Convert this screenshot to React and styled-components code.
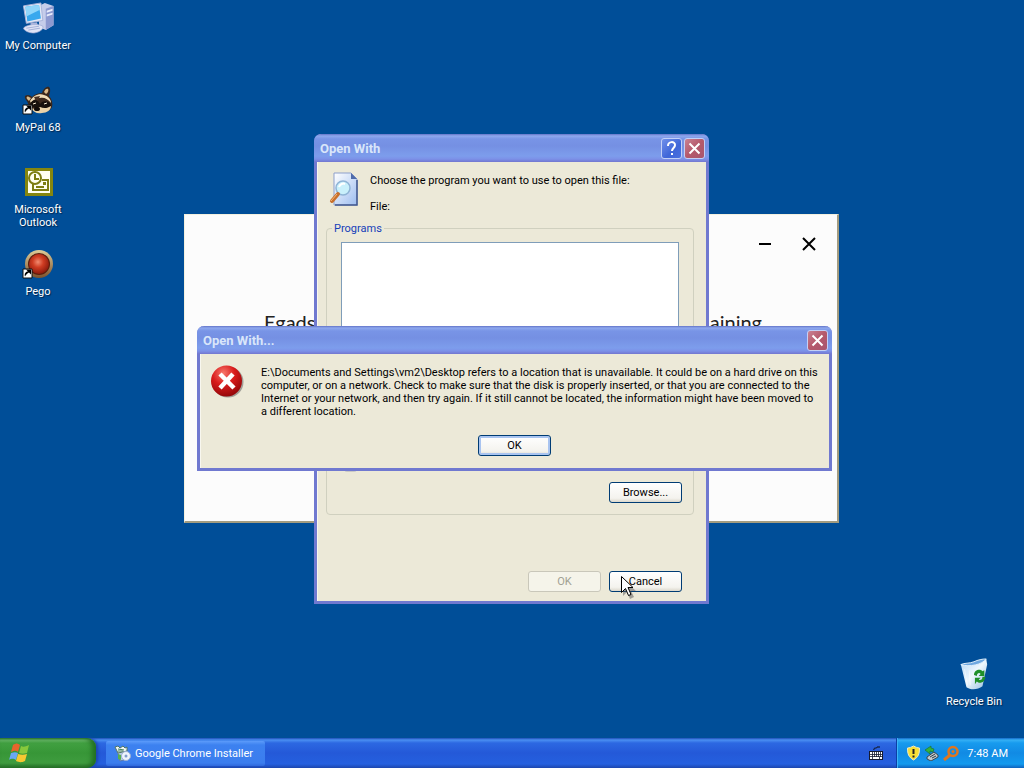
import React from "react";
import styled, { createGlobalStyle, css } from "styled-components";

const GlobalStyle = createGlobalStyle`
  * { box-sizing: border-box; }
  html, body { margin: 0; padding: 0; }
  body {
    font-family: Roboto, "Liberation Sans", sans-serif;
    font-size: 11px;
    line-height: 13px;
    color: #000;
    background: #004e98;
  }
  button, input { font: inherit; color: inherit; }
`;

const Desktop = styled.div`
  display: flex;
  flex-direction: column;
  min-height: 100vh;
  background: #004e98;
  overflow: hidden;
`;

const Workspace = styled.main`
  position: relative;
  flex: 1;
`;

const IconColumn = styled.div`
  display: flex;
  flex-direction: column;
  width: 76px;
  padding-top: 2px;
`;

const Shortcut = styled.button`
  display: flex;
  flex-direction: column;
  align-items: center;
  gap: 5px;
  width: 76px;
  height: ${(p) => (p.$compact ? "auto" : "82px")};
  padding: 0;
  border: 0;
  background: none;
  color: #fff;
  text-shadow: 1px 1px 1px #00264d;
  svg { display: block; }
`;

const BinCorner = styled.div`
  position: absolute;
  right: 12px;
  bottom: 30px;
`;

const Frame = styled.section`
  position: absolute;
  left: ${(p) => p.$x}px;
  top: ${(p) => p.$y}px;
  width: ${(p) => p.$w}px;
  display: flex;
  flex-direction: column;
`;

const Installer = styled(Frame)`
  height: 309px;
  padding: 19px 18px 0 20px;
  background: #fcfcfc;
  border: 1px solid #f4f1e0;
  border-right: 2px solid #a39c80;
  border-bottom: 2px solid #a39c80;
`;

const InstallerControls = styled.div`
  display: flex;
  justify-content: flex-end;
  gap: 24px;
`;

const PlainButton = styled.button`
  display: flex;
  padding: 0;
  border: 0;
  background: none;
`;

const InstallerMessage = styled.div`
  display: flex;
  justify-content: space-between;
  margin-top: 56px;
  padding: 0 57px 0 59px;
  font: 20px/24px Lato, "Open Sans", sans-serif;
  color: #222;
`;

const Dialog = styled(Frame)`
  height: ${(p) => p.$h}px;
  border: 3px solid #7079d0;
  border-top: 0;
  border-radius: 7px 7px 0 0;
  background: #ece9d8;
  background-clip: padding-box;
  box-shadow: inset 1px 0 #f8f7ef;
`;

const TitleBar = styled.header`
  display: flex;
  align-items: center;
  gap: 2px;
  height: 28px;
  margin: 0 -3px;
  padding: 1px 4px 0 6px;
  border-radius: 7px 7px 0 0;
  background: linear-gradient(#6273c8 0, #8ea8ee 2px, #7894e6 5px, #7590e3 12px, #7d9dec 22px, #7c91e8 25px, #7276cf 28px);
`;

const Title = styled.h1`
  flex: 1;
  margin: 0;
  font-size: 13px;
  line-height: 16px;
  font-weight: 700;
  color: #d9e6fa;
`;

const CaptionButton = styled.button`
  display: flex;
  align-items: center;
  justify-content: center;
  width: 21px;
  height: 21px;
  padding: 0;
  border: 1px solid #c3d0f6;
  border-radius: 3px;
  background: ${(p) => (p.$close ? "linear-gradient(135deg, #c98293, #b5596b 50%, #a8566e)" : "linear-gradient(135deg, #7090ea, #3f66d8 60%, #4a70e0)")};
`;

const PushButton = styled.button`
  width: 73px;
  height: 21px;
  padding: 0;
  border: 1px solid #003c74;
  border-radius: 3px;
  background: linear-gradient(#fff, #f4f3ee 80%, #dcd8cc);
  ${(p) => p.$default && css`
    box-shadow: inset 0 0 0 2px #a9c4f0;
  `}
  &:disabled {
    border-color: #c9c7ba;
    background: #f5f4ea;
    color: #a1a192;
  }
`;

const OpenBody = styled.div`
  display: flex;
  flex-direction: column;
  flex: 1;
  padding: 10px 12px 9px 9px;
`;

const Intro = styled.div`
  display: flex;
  gap: 11px;
  padding-left: 3px;
`;

const IntroText = styled.div`
  display: flex;
  flex-direction: column;
  gap: 13px;
  padding-top: 2px;
  p { margin: 0; }
`;

const Group = styled.fieldset`
  display: flex;
  flex-direction: column;
  gap: 10px;
  min-width: 0;
  margin: 9px 0 0;
  padding: 7px 11px 11px 14px;
  border: 1px solid #d0d0bf;
  border-radius: 4px;
  legend { margin-left: -9px; padding: 0 2px; color: #1540b8; }
`;

const ProgramList = styled.div`
  height: 207px;
  margin-right: 3px;
  border: 1px solid #7f9db9;
  background: #fff;
`;

const AlwaysUse = styled.label`
  display: flex;
  align-items: center;
  gap: 6px;
  padding-left: 3px;
  color: #a1a192;
  input { width: 13px; height: 13px; margin: 0; }
`;

const Buttons = styled.div`
  display: flex;
  justify-content: flex-end;
  gap: 8px;
`;

const OpenFooter = styled(Buttons)`
  margin-top: auto;
  padding-right: 12px;
`;

const ErrorBody = styled.div`
  display: flex;
  gap: 17px;
  padding: 10px 9px 0 10px;
`;

const ErrorFooter = styled(Buttons)`
  justify-content: center;
  margin-top: 17px;
`;

const Message = styled.p`
  margin: 0;
  padding-top: 2px;
  white-space: pre;
`;

const Pointer = styled.svg`
  position: absolute;
  left: 621px;
  top: 576px;
  pointer-events: none;
`;

const Taskbar = styled.footer`
  display: flex;
  align-items: stretch;
  height: 30px;
  background: linear-gradient(#1f4fb8 0, #4a8ff2 2px, #2c68e2 5px, #2459d8 15px, #2560df 26px, #1c46ae 30px);
  color: #fff;
`;

const StartButton = styled.button`
  display: flex;
  align-items: center;
  width: 96px;
  padding: 0 0 0 9px;
  border: 0;
  border-radius: 0 9px 9px 0;
  background: linear-gradient(#2c7a35 0, #6cba6c 2px, #41a041 5px, #379637 15px, #3f9c3f 25px, #276e2a 30px);
  box-shadow: inset -4px 0 5px #226f22, 2px 0 3px #1c46ae;
`;

const TaskButton = styled.button`
  display: flex;
  align-items: center;
  gap: 4px;
  width: 159px;
  height: 25px;
  margin: 3px auto 0 10px;
  padding: 0 0 0 8px;
  border: 0;
  border-radius: 2px;
  background: linear-gradient(#5c9bfa, #3c81f0 4px, #3b7dee 22px, #2f68dc);
  color: #fff;
`;

const Keyboard = styled(PlainButton)`
  align-items: center;
  margin-right: 13px;
`;

const Tray = styled.div`
  display: flex;
  align-items: center;
  gap: 3px;
  width: 128px;
  padding: 0 16px 0 9px;
  border-left: 1px solid #0c3fa5;
  box-shadow: inset 1px 0 #3bb4f8;
  background: linear-gradient(#1469c8 0, #35b0f5 2px, #179bee 5px, #118ae4 15px, #139aee 26px, #0f62bd 30px);
  time { margin-left: auto; }
`;

const Arrow = () => (
  <g>
    <path d="M1 21h9v9H1z" fill="#fff" stroke="#111" />
    <path d="M3 28.500c-1-3 1-5 3-5l-2-2h5v5l-2-2c-2 1-3 2-4 4z" fill="#000" />
  </g>
);

const ComputerIcon = () => (
  <svg width="34" height="32" viewBox="0 0 34 33">
    <path d="M18 4l6-3 9 3v20l-8 5-7-3z" fill="#c6cdea" />
    <path d="M25 7l8-3v20l-8 5z" fill="#8d99d0" />
    <path d="M26 9l6-2v2l-6 2zM26 13l6-2v2l-6 2z" fill="#e9edfb" />
    <path d="M2 4l18-3 2 18-17 3z" fill="#e3e8f6" stroke="#a8b4da" />
    <path d="M4 5l14-2 2 14-14 3z" fill="#38a8ee" />
    <path d="M4 5l14-2 1 5L5 15z" fill="#8fd6fb" />
    <path d="M9 22l7-1 1 4h-7z" fill="#aab5dd" />
    <path d="M2 27c3-4 16-5 20-2 1 3-3 6-9 7-5 0-10-2-11-5z" fill="#dfe4f5" stroke="#9da9d4" strokeWidth=".7" />
    <path d="M5 27l13-2M7 29l12-2" stroke="#a4afd8" />
  </svg>
);

const RaccoonIcon = () => (
  <svg width="32" height="32" viewBox="0 0 32 32">
    <path d="M5 17c-3-3-3-6 1-6 2 0 3 1 4 2 3-3 6-4 10-4 1-4 5-7 7-6 2 2 1 6 0 9 3 3 4 8 3 11-1 3-5 5-9 5-6 1-13-2-16-11z" fill="#3a271c" />
    <path d="M5 15c-1-2 0-3 2-2l2 1-2 3zM22 8c1-3 3-4 4-3s0 4-2 5z" fill="#d9b98a" />
    <path d="M8 17c3-5 9-8 14-6 4 1 7 4 7 8-3-4-7-6-11-5-4 0-7 2-9 5z" fill="#efdcb8" />
    <path d="M12 13l3 6 3-7z" fill="#4b3324" />
    <path d="M8 20c2-4 5-5 8-3l2 3c2-3 6-4 10-1l1 3c-3 3-8 3-11 1-3 2-7 1-10-3z" fill="#17100c" />
    <path d="M9 24c3 1 6 1 9-1 4 2 8 1 11-1 0 4-4 7-9 7-5 1-9-1-11-5z" fill="#ead2a8" />
    <path d="M11 20l3-1M22 20l3-1" stroke="#fff2d8" />
    <ellipse cx="15" cy="25" rx="3" ry="2" fill="#100a08" />
    <Arrow />
  </svg>
);

const OutlookIcon = () => (
  <svg width="32" height="32" viewBox="0 0 32 32">
    <path d="M3 2h28v28H3z" fill="#85860f" />
    <path d="M6 5h22v22H6z" fill="#fffff0" />
    <path d="M11 18v6h15V14h-6" fill="none" stroke="#7d7e12" strokeWidth="2" />
    <circle cx="13" cy="12" r="6" fill="#fffff0" stroke="#7d7e12" strokeWidth="2" />
    <path d="M13 8v5h4" fill="none" stroke="#7d7e12" strokeWidth="2" />
    <path d="M14 21h8" stroke="#7d7e12" strokeWidth="2" />
    <path d="M21 16h3v3h-3z" fill="#7d7e12" />
  </svg>
);

const PegoIcon = () => (
  <svg width="32" height="32" viewBox="0 0 32 32">
    <defs>
      <radialGradient id="pego" cx=".45" cy=".4" r=".6">
        <stop offset="0" stopColor="#f08a70" /><stop offset=".45" stopColor="#cf3c22" /><stop offset="1" stopColor="#8c1a0c" />
      </radialGradient>
      <linearGradient id="rim" x2="0" y2="1"><stop stopColor="#dccb98" /><stop offset="1" stopColor="#7d522d" /></linearGradient>
    </defs>
    <circle cx="17" cy="16" r="14" fill="url(#rim)" />
    <circle cx="17" cy="16" r="11" fill="#5b1d0d" />
    <circle cx="17" cy="16" r="10" fill="url(#pego)" />
    <Arrow />
  </svg>
);

const BinIcon = () => (
  <svg width="32" height="32" viewBox="0 0 32 34">
    <defs><linearGradient id="bin" x2="1" y2="1"><stop stopColor="#b5d7f5" /><stop offset=".5" stopColor="#eef7fd" /><stop offset="1" stopColor="#93bce0" /></linearGradient></defs>
    <path d="M2 7c8 2 19-1 27-6l1 6-5 23c-5 4-13 4-17 1z" fill="url(#bin)" />
    <path d="M2 7c4-2 9-1 14-3 4-2 9-3 13-3-4 6-18 9-27 6z" fill="#6fa8e0" stroke="#e6f3fd" />
    <path d="M6 12l3 17M11 13l1 16" stroke="#fff" opacity=".6" />
    <path d="M16 18c0-6 7-7 9-4l2-1v6h-6l2-2c-1-2-4-1-4 2zM28 20c0 6-6 8-9 5l-2 3v-7h6l-2 2c2 1 4 0 4-3z" fill="#1f8f28" />
  </svg>
);

const SearchDocIcon = () => (
  <svg width="30" height="36" viewBox="0 0 30 36">
    <defs><linearGradient id="doc" x2="1" y2="1"><stop stopColor="#fff" /><stop offset="1" stopColor="#9dbdf0" /></linearGradient></defs>
    <path d="M5 1h17l6 6v26H5z" fill="url(#doc)" stroke="#8d9fcc" />
    <path d="M28 8v25H6" fill="none" stroke="#42588f" strokeWidth="1.5" />
    <path d="M22 1v6h6z" fill="#506caa" />
    <circle cx="14" cy="16" r="7" fill="#c9f0fb" stroke="#8fb4d6" strokeWidth="1.5" />
    <path d="M10 15c1-3 4-4 6-3" stroke="#fff" strokeWidth="2" fill="none" />
    <path d="M9 22l-6 7" stroke="#c8702c" strokeWidth="4" strokeLinecap="round" />
    <path d="M8 22l-6 7" stroke="#f5b67a" />
  </svg>
);

const ErrorIcon = () => (
  <svg width="34" height="34" viewBox="0 0 34 34">
    <defs><radialGradient id="err" cx=".4" cy=".25" r=".8"><stop stopColor="#f8786c" /><stop offset=".45" stopColor="#d91c1c" /><stop offset="1" stopColor="#8e0508" /></radialGradient></defs>
    <circle cx="18" cy="18" r="15.500" fill="#555" opacity=".5" />
    <circle cx="16.500" cy="17" r="15.500" fill="url(#err)" />
    <path d="M10 10l14 14M23 10L10 24" stroke="#fff" strokeWidth="4.500" />
  </svg>
);

const CloseGlyph = () => (
  <svg width="13" height="13" viewBox="0 0 13 13"><path d="M1.500 1.500l10 10M11.500 1.500l-10 10" stroke="#fff" strokeWidth="2" /></svg>
);

const HelpGlyph = () => (
  <svg width="13" height="15" viewBox="0 0 13 15"><path d="M3 5c0-5 7-5 7-1 0 3-3 3-3 6" fill="none" stroke="#fff" strokeWidth="2" /><path d="M6 12h2v2H6z" fill="#fff" /></svg>
);

const FlagIcon = () => (
  <svg width="22" height="20" viewBox="0 0 22 20">
    <path d="M4 2c3-2 5-2 7 0l-2 7c-2-2-4-1-7 0z" fill="#e8642c" />
    <path d="M12 3c2 1 4 1 8-1l-2 8c-3 1-6 1-8 0z" fill="#86c83c" />
    <path d="M2 10c3-1 5-1 7 0l-2 7c-2-1-4-2-7 0z" fill="#6aa8f4" />
    <path d="M9 11c3 1 6 1 9 0l-2 7c-4 2-6 1-9 0z" fill="#f6c832" />
  </svg>
);

const SetupIcon = () => (
  <svg width="17" height="17" viewBox="0 0 17 17">
    <path d="M3 5l7-1 4 3v7l-8 2z" fill="#b9cbe6" stroke="#5f79a8" />
    <path d="M1 2l3-1 2 2 3-2 2 2 2-1v4L4 8z" fill="#eff5f4" stroke="#4f7667" />
    <path d="M4 4l6 1M4 6l5 0" stroke="#3f7d58" />
    <path d="M4 9l3 1v5l-3-1z" fill="#59b04f" />
    <circle cx="12" cy="11" r="4.500" fill="#eef4fc" stroke="#9bb0d4" />
    <circle cx="12" cy="11" r="1.500" fill="#7f9ccc" />
  </svg>
);

const KeyboardIcon = () => (
  <svg width="14" height="14" viewBox="0 0 14 14">
    <path d="M5 4c-1-3 3-1 3-3h3" fill="none" stroke="#111" />
    <path d="M0 5h14v9H0z" fill="#151a30" />
    <path d="M1 6h12v7H1z" fill="#fff" />
    <path d="M1 8.500h12M1 10.500h12M3.500 6v5M5.500 6v5M7.500 6v5M9.500 6v5M11.500 6v5M3.500 11v2M10.500 11v2" stroke="#151a30" strokeWidth=".8" />
  </svg>
);

const ShieldIcon = () => (
  <svg width="15" height="16" viewBox="0 0 15 16">
    <path d="M7.500 1c2 1 4 2 6 2 0 6-1 9-6 12-5-3-6-6-6-12 2 0 4-1 6-2z" fill="#f7df35" stroke="#efe9c4" />
    <path d="M7.500 4v5" stroke="#222" strokeWidth="2" /><path d="M6.500 10.500h2v2h-2z" fill="#222" />
  </svg>
);

const RemoveHardwareIcon = () => (
  <svg width="15" height="16" viewBox="0 0 15 16">
    <path d="M3 12l7-5 4 3v2l-7 4-4-2z" fill="#c3cacd" stroke="#37464f" />
    <path d="M6 12l5-3M8 13l4-2" stroke="#2f3b44" />
    <path d="M1 5l6-4v2l3 1-1 3-3-1v3z" fill="#35b03c" stroke="#1a6f2a" strokeWidth=".6" />
  </svg>
);

const MagnifierIcon = () => (
  <svg width="18" height="16" viewBox="0 0 18 16">
    <circle cx="11" cy="6.500" r="4.500" fill="none" stroke="#e0761f" strokeWidth="2.500" />
    <circle cx="11" cy="6.500" r="1.500" fill="#e0761f" />
    <path d="M8 10l-6 5" stroke="#e0761f" strokeWidth="3" />
  </svg>
);

const errorText = [
  "E:\\Documents and Settings\\vm2\\Desktop refers to a location that is unavailable. It could be on a hard drive on this",
  "computer, or on a network. Check to make sure that the disk is properly inserted, or that you are connected to the",
  "Internet or your network, and then try again. If it still cannot be located, the information might have been moved to",
  "a different location.",
].join("\n");

export default function App() {
  return (
    <Desktop>
      <GlobalStyle />
      <Workspace>
        <IconColumn>
          <Shortcut><ComputerIcon />My Computer</Shortcut>
          <Shortcut><RaccoonIcon />MyPal 68</Shortcut>
          <Shortcut><OutlookIcon />Microsoft Outlook</Shortcut>
          <Shortcut><PegoIcon />Pego</Shortcut>
        </IconColumn>
        <BinCorner>
          <Shortcut $compact><BinIcon />Recycle Bin</Shortcut>
        </BinCorner>

        <Installer $x={184} $y={214} $w={655}>
          <InstallerControls>
            <PlainButton aria-label="Minimize"><svg width="20" height="20"><path d="M4 10h12" stroke="#000" strokeWidth="2" /></svg></PlainButton>
            <PlainButton aria-label="Close"><svg width="20" height="20"><path d="M4 4l12 12M16 4L4 16" stroke="#000" strokeWidth="2" /></svg></PlainButton>
          </InstallerControls>
          <InstallerMessage><span>Egads!</span><span>remaining</span></InstallerMessage>
        </Installer>

        <Dialog $x={314} $y={134} $w={395} $h={470}>
          <TitleBar>
            <Title>Open With</Title>
            <CaptionButton aria-label="Help"><HelpGlyph /></CaptionButton>
            <CaptionButton $close aria-label="Close"><CloseGlyph /></CaptionButton>
          </TitleBar>
          <OpenBody>
            <Intro>
              <SearchDocIcon />
              <IntroText>
                <p>Choose the program you want to use to open this file:</p>
                <p>File:</p>
              </IntroText>
            </Intro>
            <Group>
              <legend>Programs</legend>
              <ProgramList />
              <AlwaysUse><input type="checkbox" disabled />Always use the selected program to open this kind of file</AlwaysUse>
              <Buttons><PushButton>Browse...</PushButton></Buttons>
            </Group>
            <OpenFooter>
              <PushButton disabled>OK</PushButton>
              <PushButton>Cancel</PushButton>
            </OpenFooter>
          </OpenBody>
        </Dialog>

        <Dialog $x={197} $y={326} $w={635} $h={145}>
          <TitleBar>
            <Title>Open With...</Title>
            <CaptionButton $close aria-label="Close"><CloseGlyph /></CaptionButton>
          </TitleBar>
          <ErrorBody>
            <ErrorIcon />
            <Message>{errorText}</Message>
          </ErrorBody>
          <ErrorFooter><PushButton $default>OK</PushButton></ErrorFooter>
        </Dialog>

        <Pointer width="16" height="24" viewBox="0 0 16 24">
          <path d="M2 3v17l4-4 3 7 4-2-3-6h5z" fill="#555" opacity=".5" />
          <path d="M.5.5v16l4-4 3 7 2.500-1-3-7H12z" fill="#fff" stroke="#000" />
        </Pointer>
      </Workspace>

      <Taskbar>
        <StartButton aria-label="Start"><FlagIcon /></StartButton>
        <TaskButton><SetupIcon />Google Chrome Installer</TaskButton>
        <Keyboard aria-label="Keyboard"><KeyboardIcon /></Keyboard>
        <Tray>
          <ShieldIcon /><RemoveHardwareIcon /><MagnifierIcon />
          <time>7:48 AM</time>
        </Tray>
      </Taskbar>
    </Desktop>
  );
}
